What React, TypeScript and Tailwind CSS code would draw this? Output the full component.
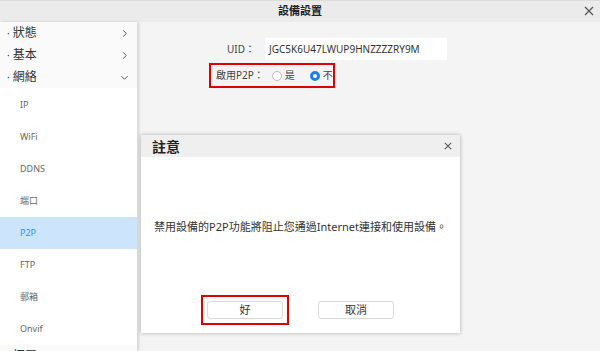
import React from "react";

const font = { fontFamily: '"Noto Sans", "Noto Sans CJK TC", sans-serif' };

function Chevron({ down }: { down?: boolean }) {
  return (
    <svg width="9" height="9" viewBox="0 0 10 10" className="text-[#555]">
      {down ? (
        <path d="M1.5 3.5 L5 7 L8.5 3.5" fill="none" stroke="currentColor" strokeWidth="1.1" />
      ) : (
        <path d="M3.5 1.5 L7 5 L3.5 8.5" fill="none" stroke="currentColor" strokeWidth="1.1" />
      )}
    </svg>
  );
}

function Close({ size = 10 }: { size?: number }) {
  return (
    <svg width={size} height={size} viewBox="0 0 10 10" className="text-[#555]">
      <path d="M1 1 L9 9 M9 1 L1 9" fill="none" stroke="currentColor" strokeWidth="1.3" />
    </svg>
  );
}

export default function App() {
  const subs = ["IP", "WiFi", "DDNS", "端口", "P2P", "FTP", "郵箱", "Onvif"];
  return (
    <div className="w-[600px] h-[351px] overflow-hidden bg-[#f4f4f4] flex flex-col relative" style={font}>
      <div className="h-[22px] shrink-0 bg-[#ebebeb] border-t border-[#dcdcdc] flex items-center justify-center relative">
        <span className="text-[11px] font-bold text-[#222]">設備設置</span>
        <div className="absolute right-[6px] top-[5px]">
          <Close size={10} />
        </div>
      </div>
      <div className="flex flex-1 min-h-0">
        <div className="w-[137px] shrink-0 bg-white shadow-[2px_0_3px_rgba(0,0,0,0.13)] flex flex-col z-10">
          {[
            ["狀態", false],
            ["基本", false],
            ["網絡", true],
          ].map(([t, d]) => (
            <div key={t as string} className="h-[22px] shrink-0 bg-[#fafafa] flex items-center pl-[7px] pr-[8px] text-[12px] text-[#333]">
              <span className="mr-[3px] text-[10px]">·</span>
              <span className="flex-1">{t as string}</span>
              <Chevron down={d as boolean} />
            </div>
          ))}
          <div className="h-px shrink-0" />
          {subs.map((s) => (
            <div
              key={s}
              className={
                "h-[32px] shrink-0 flex items-center pl-[20px] text-[9px] " +
                (s === "P2P" ? "bg-[#cde4fd] text-[#3a8ef0]" : "text-[#666]")
              }
            >
              {s}
            </div>
          ))}
          <div className="h-[22px] shrink-0 bg-[#fafafa] flex items-center pl-[7px] text-[12px] text-[#333]">
            <span className="mr-[3px] text-[10px]">·</span>
            <span>拓展</span>
          </div>
        </div>
        <div className="flex-1 flex flex-col pt-[16px]">
          <div className="flex items-center h-[22px]">
            <div className="w-[120px] text-right text-[10px] text-[#444] pr-[2px] whitespace-nowrap">UID：</div>
            <div className="w-[182px] h-[22px] bg-white flex items-center pl-[4px] text-[10px] text-[#333] ml-[8px]">
              JGC5K6U47LWUP9HNZZZZRY9M
            </div>
          </div>
          <div className="ml-[72px] mt-[3px] w-[126px] h-[25px] shrink-0 border-2 border-[#e00000] flex items-center pl-[5px] text-[10px] text-[#444] whitespace-nowrap">
            <span>啟用P2P：</span>
            <span className="ml-[8px] w-[10px] h-[10px] shrink-0 rounded-full border border-[#bbb] bg-white" />
            <span className="ml-[3px]">是</span>
            <span className="ml-[15px] w-[10px] h-[10px] shrink-0 rounded-full border-[3px] border-[#1a7ff0] bg-white" />
            <span className="ml-[3px]">不</span>
          </div>
        </div>
      </div>

      <div className="absolute left-[141px] top-[135px] w-[319px] h-[198px] bg-white shadow-[0_0_4px_rgba(0,0,0,0.3)] flex flex-col">
        <div className="h-[22px] shrink-0 bg-[#efefef] flex items-center pl-[11px] pr-[8px]">
          <span className="flex-1 text-[14px] font-bold text-[#222]">註意</span>
          <Close size={8} />
        </div>
        <div className="flex-1 flex items-center justify-center pb-[10px]">
          <span className="text-[11px] text-[#333] mt-[6px]">禁用設備的P2P功能將阻止您通過Internet連接和使用設備。</span>
        </div>
        <div className="flex justify-center gap-[35px] pb-[14px]">
          <div className="border-2 border-[#e00000] p-[4px] -m-[6px]">
            <button className="w-[76px] h-[18px] border border-[#dadada] rounded-[3px] bg-white text-[11px] text-[#333] flex items-center justify-center">
              好
            </button>
          </div>
          <button className="w-[76px] h-[18px] border border-[#dadada] rounded-[3px] bg-white text-[11px] text-[#333] flex items-center justify-center">
            取消
          </button>
        </div>
      </div>
    </div>
  );
}
